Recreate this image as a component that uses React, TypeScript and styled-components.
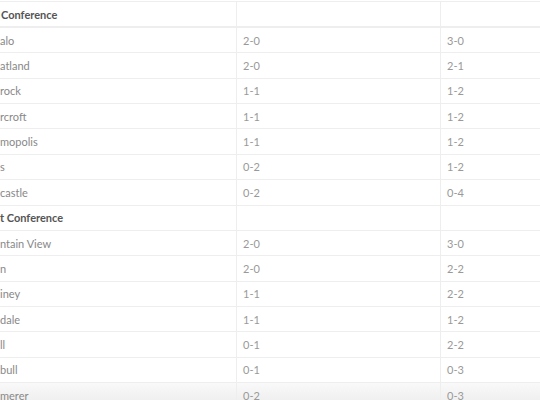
import styled, { createGlobalStyle } from "styled-components";

const GlobalStyle = createGlobalStyle`
  html, body {
    margin: 0;
    background: #fff;
  }
  body {
    font-family: Lato, "Open Sans", sans-serif;
    overflow: hidden;
  }
`;

const StyledTable = styled.div`
  margin-top: 1px;
  border-top: 1px solid #eeeeee;
  font-size: 11px;
  color: #888;
`;

const Row = styled.div<{ $variant?: "head" | "group" | "fade" }>`
  display: grid;
  grid-template-columns: 236px 204px 1fr;
  box-sizing: border-box;
  height: ${({ $variant }) => ($variant === "head" ? "26px" : "25.36px")};
  border-bottom: ${({ $variant }) => ($variant === "head" ? "2px" : "1px")} solid #eeeeee;
  background: ${({ $variant }) =>
    $variant === "fade" ? "linear-gradient(to bottom, #f9f9f9, #ececec)" : "#fff"};
  font-weight: ${({ $variant }) => ($variant === "head" || $variant === "group" ? 700 : 400)};
  color: ${({ $variant }) => ($variant === "head" || $variant === "group" ? "#555" : "#888")};
`;

const Cell = styled.div<{ $indent?: number }>`
  display: flex;
  align-items: center;
  padding-left: ${({ $indent }) => $indent ?? 6}px;
  white-space: nowrap;
  overflow: hidden;

  & + & {
    border-left: 1px solid #eeeeee;
  }
`;

const Score = styled.span`
  color: #999;
`;

type Team = { name: string; conf: string; overall: string };

const east: Team[] = [
  { name: "alo", conf: "2-0", overall: "3-0" },
  { name: "atland", conf: "2-0", overall: "2-1" },
  { name: "rock", conf: "1-1", overall: "1-2" },
  { name: "rcroft", conf: "1-1", overall: "1-2" },
  { name: "mopolis", conf: "1-1", overall: "1-2" },
  { name: "s", conf: "0-2", overall: "1-2" },
  { name: "castle", conf: "0-2", overall: "0-4" },
];

const west: Team[] = [
  { name: "ntain View", conf: "2-0", overall: "3-0" },
  { name: "n", conf: "2-0", overall: "2-2" },
  { name: "iney", conf: "1-1", overall: "2-2" },
  { name: "dale", conf: "1-1", overall: "1-2" },
  { name: "ll", conf: "0-1", overall: "2-2" },
  { name: "bull", conf: "0-1", overall: "0-3" },
  { name: "merer", conf: "0-2", overall: "0-3" },
];

function TeamRow({ team, fade }: { team: Team; fade?: boolean }) {
  return (
    <Row role="row" $variant={fade ? "fade" : undefined}>
      <Cell $indent={0}>{team.name}</Cell>
      <Cell>
        <Score>{team.conf}</Score>
      </Cell>
      <Cell>
        <Score>{team.overall}</Score>
      </Cell>
    </Row>
  );
}

export default function App() {
  return (
    <>
      <GlobalStyle />
      <StyledTable role="table">
        <Row role="row" $variant="head">
          <Cell $indent={1}>Conference</Cell>
          <Cell />
          <Cell />
        </Row>
        {east.map((t) => (
          <TeamRow key={t.name} team={t} />
        ))}
        <Row role="row" $variant="group">
          <Cell $indent={0}>t Conference</Cell>
          <Cell />
          <Cell />
        </Row>
        {west.map((t, i) => (
          <TeamRow key={t.name} team={t} fade={i === west.length - 1} />
        ))}
      </StyledTable>
    </>
  );
}
